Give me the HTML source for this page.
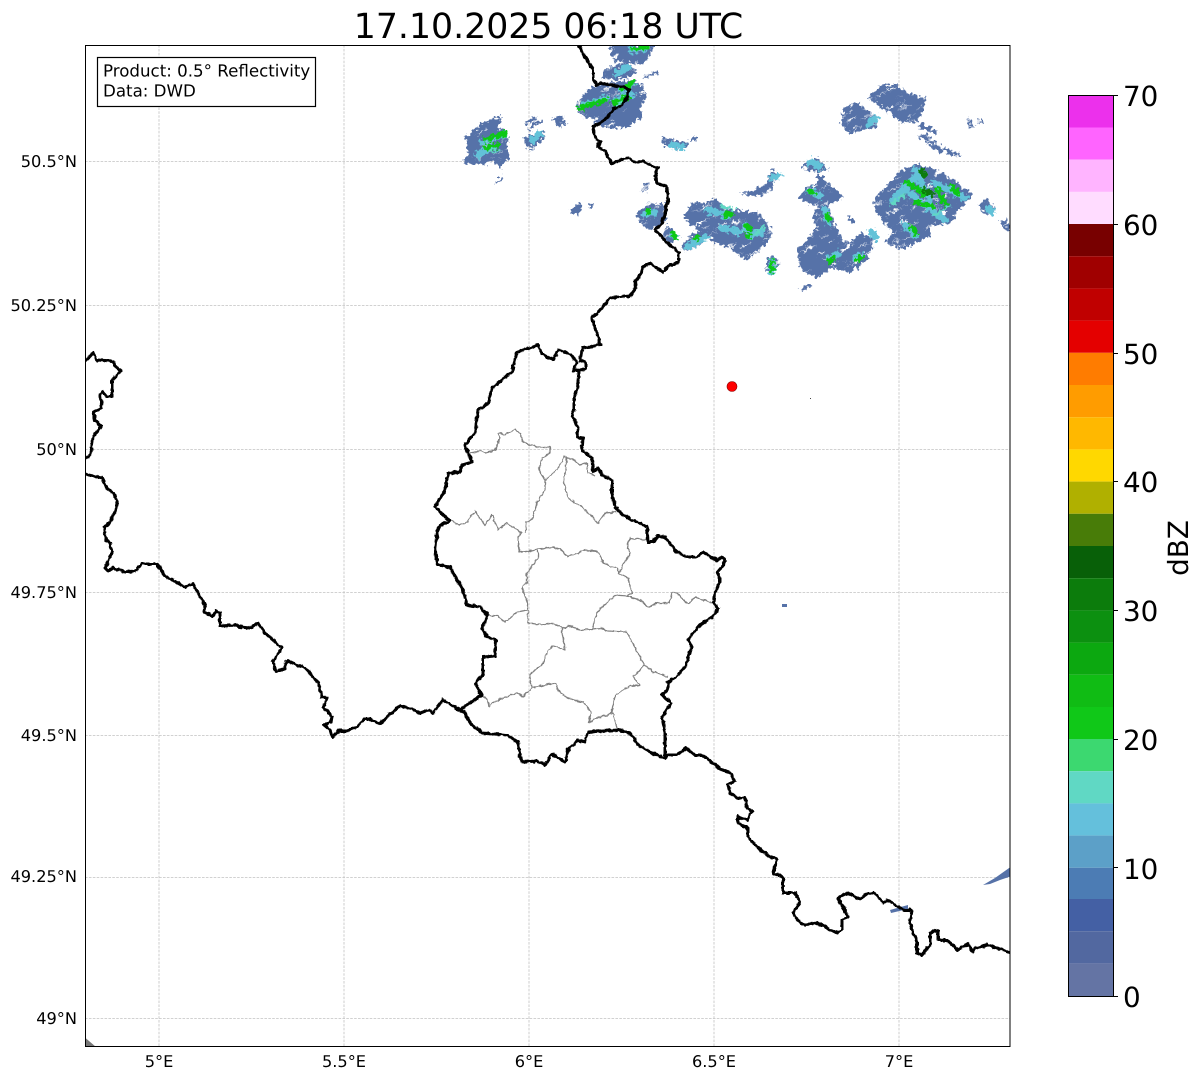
<!DOCTYPE html>
<html><head><meta charset="utf-8"><style>
html,body{margin:0;padding:0;background:#fff}
svg{display:block}
text{font-family:"DejaVu Sans","Liberation Sans",sans-serif;fill:#000;text-rendering:geometricPrecision}
.g line{stroke:#c2c2c2;stroke-width:.8;stroke-dasharray:2.6 1.3}
.xt{font-size:16.2px;text-anchor:middle}
.yt{font-size:16.2px;text-anchor:end}
.cb{font-size:27.8px}
</style></head><body>
<svg xmlns="http://www.w3.org/2000/svg" width="1202" height="1081" viewBox="0 0 1202 1081">
<defs>
<clipPath id="p"><rect x="85.5" y="45.5" width="924.5" height="1001"/></clipPath>
<filter id="j" filterUnits="userSpaceOnUse" x="400" y="30" width="640" height="280"><feTurbulence type="fractalNoise" baseFrequency="0.28" numOctaves="2" seed="4"/><feDisplacementMap in="SourceGraphic" scale="9" xChannelSelector="R" yChannelSelector="G"/></filter>
<filter id="w" filterUnits="userSpaceOnUse" x="0" y="0" width="1202" height="1081"><feTurbulence type="fractalNoise" baseFrequency="0.22" numOctaves="2" seed="9"/><feDisplacementMap in="SourceGraphic" scale="3.5" xChannelSelector="R" yChannelSelector="G"/></filter>
<filter id="n" filterUnits="userSpaceOnUse" x="-300" y="-500" width="1800" height="1400"><feTurbulence type="fractalNoise" baseFrequency="0.06 0.3" numOctaves="2" seed="7"/><feColorMatrix type="matrix" values="0 0 0 0 1  0 0 0 0 1  0 0 0 0 1  8 0 0 0 -1.95"/></filter>
<mask id="m" maskUnits="userSpaceOnUse" x="0" y="0" width="1202" height="1081"><rect x="-300" y="-500" width="1800" height="1400" fill="#fff" transform="rotate(-28 550 170)" filter="url(#n)"/></mask>
</defs>
<rect width="1202" height="1081" fill="#fff"/>
<text x="548.500" y="38" font-size="34.700" text-anchor="middle">17.10.2025 06:18 UTC</text>
<g class="g">
<line x1="159" y1="45" x2="159" y2="1046"/><line x1="344" y1="45" x2="344" y2="1046"/><line x1="529" y1="45" x2="529" y2="1046"/><line x1="714" y1="45" x2="714" y2="1046"/><line x1="899" y1="45" x2="899" y2="1046"/>
<line x1="85" y1="161.500" x2="1010" y2="161.500"/><line x1="85" y1="305.500" x2="1010" y2="305.500"/><line x1="85" y1="449.500" x2="1010" y2="449.500"/><line x1="85" y1="592.500" x2="1010" y2="592.500"/><line x1="85" y1="735.500" x2="1010" y2="735.500"/><line x1="85" y1="877.500" x2="1010" y2="877.500"/><line x1="85" y1="1018.500" x2="1010" y2="1018.500"/>
</g>
<g clip-path="url(#p)">
<g filter="url(#j)">
<g mask="url(#m)">
<g fill="#5672a8">
<path d="M465 138 483 123 493 118 502 116 497 127 508 132 508 140 508 158 500 169 492 162 475 165 463 163 468 153Z"/>
<path d="M495 183 502 175 504 178 497 185Z"/>
<path d="M525 122 535 116 536 119 526 125Z"/><path d="M528 127 543 118 544 121 530 130Z"/>
<path d="M523 138 543 130 545 138 530 152 525 143Z"/>
<path d="M552 118 562 115 567 125 557 127Z"/>
<path d="M578 100 590 88 610 83 630 80 642 85 647 95 640 107 642 118 627 127 610 129 593 123 597 118 582 117 577 108Z"/>
<path d="M600 78 607 68 627 62 637 72 630 77 613 80Z"/>
<path d="M610 50 613 44 655 44 650 55 643 65 623 62 613 60Z"/>
<path d="M643 75 658 71 658 74 644 78Z"/>
<path d="M662 137 670 138 688 143 688 148 677 150 663 145Z"/><path d="M690 137 697 137 697 140 690 141Z"/>
<path d="M640 190 648 182 649 188 643 193Z"/>
<path d="M568 212 580 203 583 208 578 215Z"/><path d="M589 204 593 204 593 207 589 207Z"/>
<path d="M637 212 650 203 663 203 667 220 657 228 647 230 638 220Z"/>
<path d="M667 225 680 237 670 243 663 237Z"/>
<path d="M680 248 693 233 710 232 703 243 687 252Z"/>
<path d="M683 218 692 202 705 203 715 200 735 210 760 213 772 232 768 243 755 255 745 260 730 248 715 242 700 232Z"/>
<path d="M740 193 750 196 765 195 772 188 778 172 772 170 765 185 752 190Z"/>
<path d="M764 267 770 256 780 260 772 276Z"/>
<path d="M803 165 817 157 828 170 817 172 803 170Z"/>
<path d="M817 172 830 185 845 197 828 205 832 217 842 240 850 243 860 233 875 240 867 260 850 273 833 267 818 278 800 270 798 250 817 227 812 217 818 207 798 198 807 187 817 183Z"/>
<path d="M800 288 811 283 812 287 802 291Z"/>
<path d="M848 215 856 222 854 224 847 219Z"/>
<path d="M873 203 888 183 903 170 917 164 937 170 960 185 973 195 960 210 950 223 930 227 930 237 900 250 885 242 893 233 877 213Z"/>
<path d="M978 205 988 198 995 210 986 215Z"/>
<path d="M1000 222 1007 218 1012 232 1003 228Z"/>
<path d="M868 98 880 85 898 85 907 93 925 98 923 110 917 122 902 123 890 113 875 103Z"/>
<path d="M920 123 938 131 936 135 918 127Z"/><path d="M917 135 927 134 943 150 941 154 926 142Z"/><path d="M943 147 962 155 960 158 944 151Z"/>
<path d="M840 120 847 105 858 102 877 118 875 128 850 133 843 127Z"/>
<path d="M966 120 970 118 974 126 971 128Z"/><path d="M976 120 980 118 982 122 979 124Z"/>
</g>
</g>
<g fill="none" stroke="#62c2d8" stroke-width="7" stroke-linecap="round">
<path d="M483 142 505 134M478 155 490 148M532 140 540 134M582 106 605 99M622 90 632 84M615 100 632 94M617 73 628 68M632 50 645 48M672 145 682 147M645 214 655 212M672 235 675 237M688 247 705 237M708 210 728 216M745 225 750 236 762 232M722 228 740 232M810 162 820 167M810 191 820 196M825 210 828 222M830 258 838 254M855 258 862 256M875 238 872 232M893 200 915 178M915 170 930 200M905 190 945 220M935 183 965 198M905 225 915 235M868 125 876 118M988 208 992 212M773 178 778 175M772 262 771 272"/>
</g>
<g fill="none" stroke="#60d8c4" stroke-width="3"><path d="M890 205 905 195M935 215 950 205M720 205 735 210M755 235 765 225M615 108 625 100M490 152 500 150"/></g>
<g fill="none" stroke="#10c818" stroke-width="5.500" stroke-linecap="round">
<path d="M485 140 506 133M487 148 497 145M623 89 632 83M580 108 605 100M613 103 628 97M634 49 646 47M648 211 650 212M673 233 675 238M695 238 697 237M725 215 731 214M746 226 750 228M747 235 749 236M772 262 771 271M810 191 813 193M827 216 829 219M829 261 834 258M858 259 862 257M907 182 925 195M915 202 932 206M937 190 945 203M912 227 915 233M952 186 958 194"/>
</g>
<g fill="none" stroke="#0c7c0c" stroke-width="5"><path d="M920 168 926 178M922 188 934 196"/></g>
</g>
<g fill="#5672a8">
<path d="M782 604 787 604 787 607 782 607Z"/>
<path d="M983 885 995 878 1012 866 1012 876 1000 880 990 884Z"/>
<path d="M890 910 908 905 908 909 891 913Z"/>
</g>
<path d="M85.500 1038 96 1047H85.500Z" fill="#777"/>
<rect x="810" y="398" width="1" height="1" fill="#444"/>
<g filter="url(#w)">
<g fill="none" stroke="#808080" stroke-width="1.300" stroke-linejoin="round">
<path d="M470 453 482 451 485 453 495 450 500 438 498 434 502 433 505 435 515 429 520 434 523 442 537 447 543 447 550 447 550 453 542 458 539 470 545 480 545 490 537 502 533 518 526 522 525 533"/>
<path d="M545 480 548 477 557 470 564 457 567 458 573 459 580 465 587 463 588 473 595 476"/>
<path d="M567 458 564 482 568 498 583 508 598 523 605 513 617 512"/>
<path d="M452 521 460 525 468 522 475 511 485 525 492 515 498 530 507 523 522 533 518 537 519 553 538 549 552 547 560 549 568 557 585 550 598 551 603 563 617 568 619 573 630 553 627 547 630 538 647 540"/>
<path d="M538 550 538 558 527 573 527 582 522 588 528 603 528 623 543 625 552 623 562 627 562 632 565 650 555 646 548 650 543 663 529 675 532 688 555 683 558 690 567 698 583 702 592 712 588 723 597 718 613 713 617 728"/>
<path d="M527 610 517 612 505 622 497 616 488 615"/>
<path d="M562 628 570 626 580 630 592 629 597 612 615 595 627 596 632 593 628 578 618 573"/>
<path d="M627 596 640 600 648 607 658 603 669 603 672 593 677 593 688 604 695 597 713 603"/>
<path d="M592 629 602 628 608 631 627 632 635 648 643 663 653 672 668 677"/>
<path d="M645 665 633 677 640 685 630 686 615 695 612 713"/>
<path d="M483 696 488 700 489 707 493 702 517 693 523 696 532 688"/>
</g>
<g fill="none" stroke="#000" stroke-width="3" stroke-linejoin="round" stroke-linecap="round">
<path d="M578 44 583 53 588 62 593 70 593 78 596 85 600 83 610 85 623 87 629 90 627 98 622 105 613 109 607 118 597 125 593 127 595 137 600 142 598 147 605 151 612 164 623 159 628 158 635 162 643 161 650 165 658 168 655 175 657 183 667 187 668 200 665 213 662 223 655 230 662 237 667 243 679 252 679 262 667 267 663 272 650 263 643 267 642 272 635 282 636 288 630 296 610 298 600 310 592 318 596 330 600 345 583 348 580 360 586 363 586 369 573 371 577 362 570 354 558 350 553 360 542 354 538 345 517 352 512 372 493 387 488 403 478 410 475 433 465 445 472 462 462 465 460 472 448 473 445 490 435 507 450 521 440 525 437 532 435 552 438 565 450 567 463 590 467 605 480 607 488 615 482 628 487 637 496 640 495 656 483 657 483 675 475 683 482 695 470 703 460 710 465 713 470 723 482 733 495 734 507 735 518 742 520 757 523 762 537 761 545 765 552 754 565 762 568 750 578 740 585 742 588 732 618 730 630 733 638 745 652 753 665 758 668 755 677 755 686 748 695 755 702 755 713 763 720 769 730 773 735 781 728 785 730 793 737 798 745 798 747 808 752 811 747 820 738 817 738 823 748 828 748 837 757 847 770 857 777 859 773 873 783 877 783 893 795 893 800 902 793 913 802 925 818 923 837 933 842 930 842 920 848 917 843 907 838 898 847 893 860 899 868 893 875 893 883 903 888 900 903 910 912 910 910 923 917 943 917 953 922 955 930 945 930 933 938 930 938 940 947 940 958 950 968 944 973 952 975 948 988 945 1003 950 1011 953"/>
<path d="M579 372 577 390 574 397 574 410 572 415 578 427 577 437 583 438 582 450 592 458 593 472 598 468 602 475 612 480 612 493 615 507 623 515 633 521 638 522 647 527 648 542 653 542 658 536 665 537 677 552 687 557 697 557 703 552 712 558 718 560 722 557 725 560 722 567 717 572 720 578 720 582 715 592 714 603 718 608 715 615 700 625 688 640 692 647 685 667 675 678 668 682 669 688 662 695 671 703 662 717 665 733 665 757"/>
<path d="M84 363 93 353 97 360 113 361 115 366 121 371 112 380 112 397 107 397 103 392 100 395 102 408 93 412 95 420 101 426 93 437 91 453 84 460"/>
<path d="M84 474 102 478 107 488 115 495 117 503 115 512 108 525 104 528 106 540 110 542 112 553 105 568 108 571 113 568 125 572 135 571 142 564 157 564 165 576 185 587 193 584 205 605 204 612 213 616 216 611 220 613 220 626 237 625 240 627 250 628 258 623 265 633 282 648 273 661 276 672 285 668 287 661 305 668 318 682 322 697 327 698 323 707 332 716 331 722 324 725 330 730 332 737 339 731 347 731 357 727 364 719 370 719 380 724 392 712 400 706 412 709 420 713 428 710 433 713 443 700 460 710"/>
</g>
</g>
<circle cx="732" cy="386.500" r="5" fill="#f00" stroke="#800" stroke-width=".6"/>
</g>
<rect x="85.500" y="45.500" width="924.500" height="1001" fill="none" stroke="#000" stroke-width="1"/>
<rect x="97.500" y="57.500" width="218" height="49" fill="#fff" stroke="#000" stroke-width="1.200"/>
<text x="103" y="76.500" font-size="16.670">Product: 0.5° Reflectivity</text>
<text x="103" y="96.500" font-size="16.670">Data: DWD</text>
<g class="yt">
<text x="77" y="167">50.5°N</text><text x="77" y="311">50.25°N</text><text x="77" y="455">50°N</text><text x="77" y="598">49.75°N</text><text x="77" y="741">49.5°N</text><text x="77" y="882">49.25°N</text><text x="77" y="1024">49°N</text>
</g>
<g class="xt">
<text x="159" y="1067">5°E</text><text x="344" y="1067">5.5°E</text><text x="529" y="1067">6°E</text><text x="714" y="1067">6.5°E</text><text x="899" y="1067">7°E</text>
</g>
<g>
<rect x="1068.500" y="95.500" width="45" height="32.200" fill="#ec30ec"/>
<rect x="1068.500" y="127.500" width="45" height="32.200" fill="#ff64ff"/>
<rect x="1068.500" y="159.700" width="45" height="32.200" fill="#ffb4ff"/>
<rect x="1068.500" y="191.900" width="45" height="32.200" fill="#ffdcff"/>
<rect x="1068.500" y="224" width="45" height="32.200" fill="#780000"/>
<rect x="1068.500" y="256.200" width="45" height="32.200" fill="#a00000"/>
<rect x="1068.500" y="288.400" width="45" height="32.200" fill="#c00000"/>
<rect x="1068.500" y="320.600" width="45" height="32.200" fill="#e40000"/>
<rect x="1068.500" y="352.800" width="45" height="32.200" fill="#ff7c00"/>
<rect x="1068.500" y="385" width="45" height="32.200" fill="#ff9c00"/>
<rect x="1068.500" y="417.200" width="45" height="32.200" fill="#ffb800"/>
<rect x="1068.500" y="449.400" width="45" height="32.200" fill="#ffd800"/>
<rect x="1068.500" y="481.600" width="45" height="32.200" fill="#b0b000"/>
<rect x="1068.500" y="513.800" width="45" height="32.200" fill="#487c08"/>
<rect x="1068.500" y="546" width="45" height="32.200" fill="#086008"/>
<rect x="1068.500" y="578.200" width="45" height="32.200" fill="#0c7c0c"/>
<rect x="1068.500" y="610.400" width="45" height="32.200" fill="#0c9010"/>
<rect x="1068.500" y="642.600" width="45" height="32.200" fill="#0ca810"/>
<rect x="1068.500" y="674.800" width="45" height="32.200" fill="#10bc14"/>
<rect x="1068.500" y="707" width="45" height="32.200" fill="#10c818"/>
<rect x="1068.500" y="739" width="45" height="32.200" fill="#3cd870"/>
<rect x="1068.500" y="771.200" width="45" height="32.200" fill="#60d8c4"/>
<rect x="1068.500" y="803.400" width="45" height="32.200" fill="#64c0dc"/>
<rect x="1068.500" y="835.600" width="45" height="32.200" fill="#5ca0c8"/>
<rect x="1068.500" y="867.800" width="45" height="32.200" fill="#4c7cb4"/>
<rect x="1068.500" y="899" width="45" height="32.200" fill="#4460a4"/>
<rect x="1068.500" y="931.200" width="45" height="32.200" fill="#5268a0"/>
<rect x="1068.500" y="963.400" width="45" height="32.600" fill="#6474a4"/>
<rect x="1068.500" y="95.500" width="45" height="901" fill="none" stroke="#000" stroke-width="1"/>
<path d="M1113 95.500h5M1113 224.500h5M1113 353.500h5M1113 481.500h5M1113 610.500h5M1113 739.500h5M1113 867.500h5M1113 996.500h5" stroke="#000" stroke-width="1"/>
</g>
<g class="cb">
<text x="1123" y="106">70</text><text x="1123" y="235">60</text><text x="1123" y="364">50</text><text x="1123" y="492">40</text><text x="1123" y="621">30</text><text x="1123" y="750">20</text><text x="1123" y="879">10</text><text x="1123" y="1007">0</text>
</g>
<text transform="translate(1188 548) rotate(-90)" font-size="27.800" text-anchor="middle">dBZ</text>
</svg>
</body></html>
